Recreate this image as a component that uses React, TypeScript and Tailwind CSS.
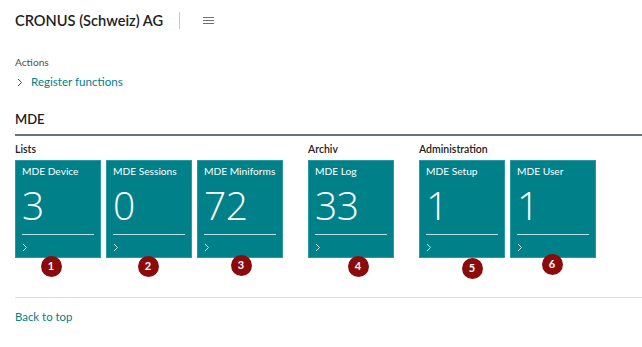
import React from "react";

const font = { fontFamily: '"Segoe UI", Lato, "Open Sans", sans-serif' };
const numFont = { fontFamily: '"Open Sans", "Noto Sans", sans-serif' };

function Chevron({ color }: { color: string }) {
  return (
    <svg width="6" height="9" viewBox="0 0 6 9" className="block">
      <path d="M1 1 L4.5 4.5 L1 8" fill="none" stroke={color} strokeWidth="1" />
    </svg>
  );
}

function Tile({ title, value }: { title: string; value: string }) {
  return (
    <div className="w-[86px] h-[98px] bg-[#00818a] border border-[#2a9aa2] flex flex-col px-[6px] text-white">
      <div className="shrink-0 h-[14px] text-[10.2px] leading-[14px] mt-[3px] whitespace-nowrap">{title}</div>
      <div className="shrink-0 h-[40px] text-[39px] leading-[40px] font-light mt-[7px] tracking-[-0.5px]" style={numFont}>
        {value}
      </div>
      <div className="shrink-0 h-px bg-[#b9dfe2] mt-[9px]" />
      <div className="shrink-0 mt-[8px]">
        <Chevron color="#cfe9eb" />
      </div>
    </div>
  );
}

function Badge({ n, x, y }: { n: number; x: number; y: number }) {
  return (
    <div
      className="absolute w-[21px] h-[21px] rounded-full bg-[#8b0b0b] text-white text-[11px] font-bold flex items-center justify-center"
      style={{ left: x - 10.5, top: y - 10.5, fontFamily: "Lato, sans-serif" }}
    >
      {n}
    </div>
  );
}

export default function App() {
  return (
    <div className="relative w-[642px] h-[347px] bg-white overflow-hidden text-[#212121]" style={font}>
      <div className="h-[41px] flex items-center pl-[15px]">
        <div className="text-[14.6px] font-semibold text-[#212121]">CRONUS (Schweiz) AG</div>
        <div className="ml-[16px] w-px h-[17px] bg-[#c8c8c8]" />
        <div className="ml-[23px] flex flex-col gap-[2px]">
          <div className="w-[11px] h-px bg-[#707070]" />
          <div className="w-[11px] h-px bg-[#707070]" />
          <div className="w-[11px] h-px bg-[#707070]" />
        </div>
      </div>
      <div className="pl-[15px]">
        <div className="mt-[14px] text-[10.2px] leading-[14px] text-[#505050]">Actions</div>
        <div className="mt-[5px] flex items-center text-[11.6px] leading-[16px] text-[#00818a]">
          <span className="mr-[8px] ml-[2px]">
            <Chevron color="#505050" />
          </span>
          Register functions
        </div>
        <div className="mt-[20px] text-[13px] leading-[18px] font-semibold">MDE</div>
        <div className="mt-[6px] h-[2px] bg-[#6b717b]" />
        <div className="mt-[6px] flex gap-[25px]">
          <div>
            <div className="text-[10.5px] leading-[14px] font-semibold">Lists</div>
            <div className="mt-[4px] flex gap-[5px]">
              <Tile title="MDE Device" value="3" />
              <Tile title="MDE Sessions" value="0" />
              <Tile title="MDE Miniforms" value="72" />
            </div>
          </div>
          <div>
            <div className="text-[10.5px] leading-[14px] font-semibold">Archiv</div>
            <div className="mt-[4px] flex gap-[5px]">
              <Tile title="MDE Log" value="33" />
            </div>
          </div>
          <div>
            <div className="text-[10.5px] leading-[14px] font-semibold">Administration</div>
            <div className="mt-[4px] flex gap-[5px]">
              <Tile title="MDE Setup" value="1" />
              <Tile title="MDE User" value="1" />
            </div>
          </div>
        </div>
        <div className="mt-[39px] h-px bg-[#dcdcdc]" />
        <div className="mt-[11px] text-[11.4px] leading-[16px] text-[#00818a]">Back to top</div>
      </div>
      <Badge n={1} x={51} y={266} />
      <Badge n={2} x={148} y={266} />
      <Badge n={3} x={241} y={265} />
      <Badge n={4} x={358} y={266} />
      <Badge n={5} x={472} y={268} />
      <Badge n={6} x={552} y={264} />
    </div>
  );
}
